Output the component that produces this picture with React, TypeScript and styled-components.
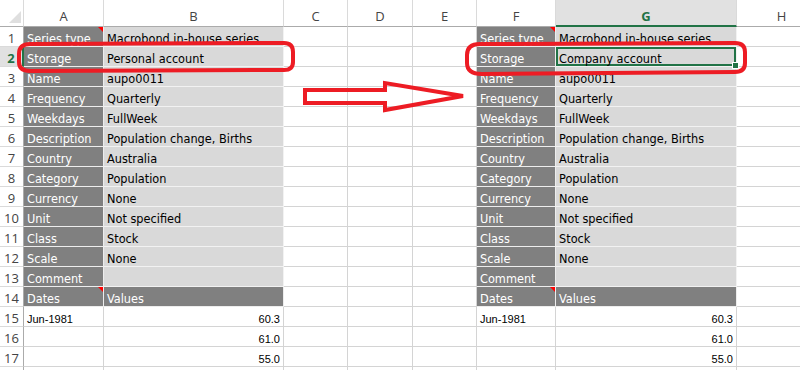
import React from "react";
import styled, { createGlobalStyle, css } from "styled-components";

const GlobalStyle = createGlobalStyle`
  html, body {
    margin: 0;
    padding: 0;
    background: #ffffff;
  }
  body {
    width: 800px;
    height: 370px;
    overflow: hidden;
  }
`;

const GREEN = "#217346";
const RED = "#ed1c24";

type Kind = "label" | "value" | "head" | "plain" | "date" | "num";

const COLS = [
  { key: "A", width: 80 },
  { key: "B", width: 180 },
  { key: "C", width: 64 },
  { key: "D", width: 65 },
  { key: "E", width: 64 },
  { key: "F", width: 79 },
  { key: "G", width: 181 },
  { key: "H", width: 90 },
];

const META: [string, string][] = [
  ["Series type", "Macrobond in-house series"],
  ["Storage", "Personal account"],
  ["Name", "aupo0011"],
  ["Frequency", "Quarterly"],
  ["Weekdays", "FullWeek"],
  ["Description", "Population change, Births"],
  ["Country", "Australia"],
  ["Category", "Population"],
  ["Currency", "None"],
  ["Unit", "Not specified"],
  ["Class", "Stock"],
  ["Scale", "None"],
  ["Comment", ""],
];

type CellData = { kind: Kind; text?: string; note?: boolean; selected?: boolean };

// one series block (two columns) for a given sheet row
const block = (row: number, storage: string, selectValue: boolean): CellData[] => {
  if (row <= 13) {
    const [label, value] = META[row - 1];
    return [
      { kind: "label", text: label, note: row === 1 },
      {
        kind: "value",
        text: row === 2 ? storage : value,
        selected: selectValue && row === 2,
      },
    ];
  }
  if (row === 14)
    return [
      { kind: "head", text: "Dates", note: true },
      { kind: "head", text: "Values" },
    ];
  const values: Record<number, [string, string]> = {
    15: ["Jun-1981", "60.3"],
    16: ["", "61.0"],
    17: ["", "55.0"],
  };
  const v = values[row];
  if (!v) return [{ kind: "plain" }, { kind: "plain" }];
  return [
    { kind: "date", text: v[0] },
    { kind: "num", text: v[1] },
  ];
};

const buildRow = (row: number): CellData[] => [
  ...block(row, "Personal account", false),
  { kind: "plain" },
  { kind: "plain" },
  { kind: "plain" },
  ...block(row, "Company account", true),
  { kind: "plain" },
];

const ROWS = Array.from({ length: 17 }, (_, i) => i + 1);

const App = () => (
  <>
    <GlobalStyle />
    <Frame>
      <Sheet>
        <Corner>
          <CornerMark />
        </Corner>
        {COLS.map((c) => (
          <ColHeader key={c.key} active={c.key === "G"}>
            {c.key}
          </ColHeader>
        ))}
        {ROWS.map((r) => (
          <React.Fragment key={r}>
            <RowHeader active={r === 2}>{r}</RowHeader>
            {buildRow(r).map((cell, i) => (
              <Cell
                key={i}
                kind={cell.kind}
                note={cell.note}
                selected={cell.selected}
              >
                {cell.text}
              </Cell>
            ))}
          </React.Fragment>
        ))}
        <RowHeader />
        {COLS.map((c) => (
          <Cell key={c.key} kind="plain" />
        ))}
      </Sheet>
      <Markup width="800" height="370" viewBox="0 0 800 370">
        <path
          d="M30 44 L284 43 Q293 43 293 52 L293 62 Q293 70 284 70 L30 71 Q19 71 19 62 L19 54 Q19 44 30 44 Z"
          fill="none"
          stroke={RED}
          strokeWidth="4"
          strokeLinejoin="round"
        />
        <path
          d="M480 44 L735 43 Q745 43 745 52 L745 63 Q745 72 735 72 L482 74 Q467 74 467 63 L467 55 Q467 44 480 44 Z"
          fill="none"
          stroke={RED}
          strokeWidth="4"
          strokeLinejoin="round"
        />
        <polygon
          points="305,90 385,90 385,83 463,96 385,110 385,103 305,103"
          fill="none"
          stroke={RED}
          strokeWidth="4"
          strokeLinejoin="miter"
        />
      </Markup>
    </Frame>
  </>
);

export default App;

const Frame = styled.div`
  position: relative;
  width: 800px;
  height: 370px;
  overflow: hidden;
`;

const Sheet = styled.div`
  display: grid;
  grid-template-columns: 24px ${COLS.map((c) => `${c.width}px`).join(" ")};
  grid-template-rows: 27px repeat(18, 20px);
`;

const Corner = styled.div`
  position: relative;
  box-sizing: border-box;
  background: #ffffff;
  border-right: 1px solid #dadada;
  border-bottom: 1px solid #ababab;
`;

const CornerMark = styled.div`
  position: absolute;
  right: 2px;
  bottom: 3px;
  width: 0;
  height: 0;
  border-left: 12px solid transparent;
  border-bottom: 12px solid #dfdfdf;
`;

const ColHeader = styled.div<{ active?: boolean }>`
  box-sizing: border-box;
  display: flex;
  align-items: center;
  justify-content: center;
  padding-top: 6px;
  font-family: "Open Sans", "Liberation Sans", sans-serif;
  font-size: 13px;
  color: #444444;
  background: #ffffff;
  border-right: 1px solid #dadada;
  border-bottom: 1px solid #ababab;

  ${(p) =>
    p.active &&
    css`
      background: #e1e1e1;
      color: ${GREEN};
      font-weight: 700;
      border-bottom: 2px solid ${GREEN};
    `}
`;

const RowHeader = styled.div<{ active?: boolean }>`
  box-sizing: border-box;
  display: flex;
  align-items: center;
  justify-content: center;
  padding-top: 2px;
  font-family: "Open Sans", "Liberation Sans", sans-serif;
  font-size: 13px;
  color: #444444;
  background: #ffffff;
  border-right: 1px solid #ababab;
  border-bottom: 1px solid #dadada;

  ${(p) =>
    p.active &&
    css`
      background: #e1e1e1;
      color: ${GREEN};
      font-weight: 700;
      border-right: 2px solid ${GREEN};
    `}
`;

const cellKinds: Record<Kind, ReturnType<typeof css>> = {
  label: css`
    background: #808080;
    color: #ffffff;
    border-color: #ededed;
  `,
  value: css`
    background: #d9d9d9;
    color: #000000;
    border-color: #f2f2f2;
  `,
  head: css`
    background: #808080;
    color: #ffffff;
    border-color: #ededed;
  `,
  plain: css`
    background: #ffffff;
  `,
  date: css`
    background: #ffffff;
    font-family: "Liberation Sans", Arial, sans-serif;
    font-size: 11px;
    line-height: 13px;
    padding-bottom: 0;
  `,
  num: css`
    background: #ffffff;
    font-family: "Liberation Sans", Arial, sans-serif;
    font-size: 11px;
    line-height: 13px;
    padding-bottom: 0;
    justify-content: flex-end;
    padding-right: 3px;
  `,
};

const Cell = styled.div<{ kind: Kind; note?: boolean; selected?: boolean }>`
  position: relative;
  box-sizing: border-box;
  display: flex;
  align-items: flex-end;
  padding: 0 3px 0 3px;
  overflow: visible;
  white-space: nowrap;
  font-family: "DejaVu Sans Condensed", "DejaVu Sans", sans-serif;
  font-size: 12.6px;
  line-height: 15px;
  color: #000000;
  border-right: 1px solid #d4d4d4;
  border-bottom: 1px solid #d4d4d4;

  ${(p) => cellKinds[p.kind]}

  ${(p) =>
    p.note &&
    css`
      &::after {
        content: "";
        position: absolute;
        top: 0;
        right: 0;
        border-left: 5px solid transparent;
        border-top: 5px solid #ff0000;
      }
    `}

  ${(p) =>
    p.selected &&
    css`
      box-shadow: inset 0 0 0 2px ${GREEN};
      &::before {
        content: "";
        position: absolute;
        right: -3px;
        bottom: -3px;
        width: 5px;
        height: 5px;
        background: ${GREEN};
        border: 1px solid #ffffff;
        z-index: 1;
      }
    `}
`;

const Markup = styled.svg`
  position: absolute;
  top: 0;
  left: 0;
  pointer-events: none;
`;
